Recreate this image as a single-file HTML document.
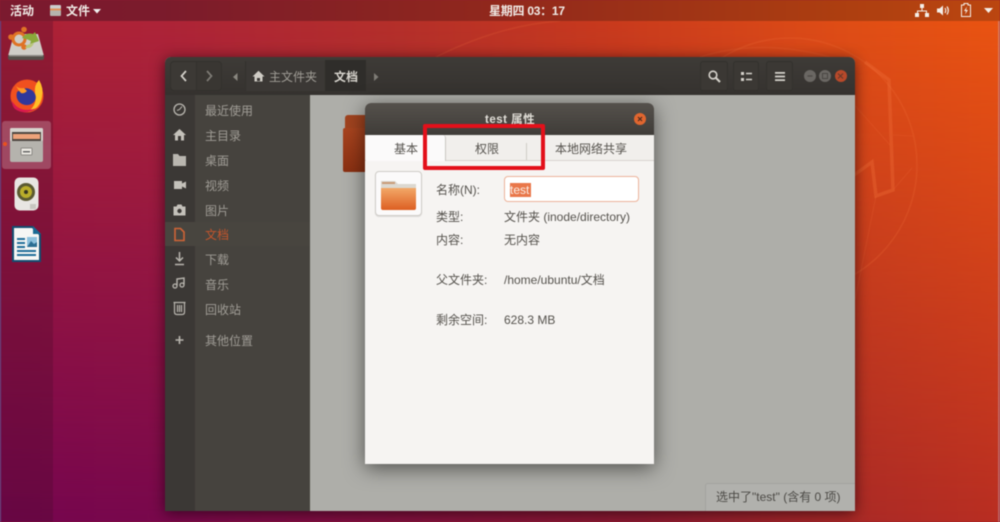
<!DOCTYPE html>
<html><head><meta charset="utf-8"><style>
*{box-sizing:border-box}
html,body{margin:0;padding:0}
body{width:1000px;height:522px;overflow:hidden;position:relative;background:#951c30}
#w{position:absolute;left:0;top:0;width:1000px;height:522px;overflow:hidden;filter:blur(.45px);font-family:"Liberation Sans","Noto Sans CJK SC",sans-serif;font-size:12px;
background:linear-gradient(90deg,#ae2236 0%,#ae2438 16%,#b5302a 40%,#c83a1e 60%,#e04e16 85%,#ea5412 100%)}
#b{position:absolute;left:0;top:0;width:1000px;height:522px;background:linear-gradient(90deg,#75054f 0%,#78084c 16%,#8a1a30 64%,#aa2a26 86%,#b82e22 100%);-webkit-mask-image:linear-gradient(to bottom,transparent 4%,#000 100%);mask-image:linear-gradient(to bottom,transparent 4%,#000 100%)}
.a{position:absolute;white-space:nowrap}
svg{position:absolute;overflow:visible}
.side{color:#a09d96;font-size:12px;left:205px}
.lbl{color:#55524d;font-size:12px}
</style></head><body><div id="w">
<div id="b"></div>
<svg style="left:0;top:0" width="1000" height="522" viewBox="0 0 1000 522" fill="none">
<circle cx="790" cy="165" r="127" stroke="#f0703a" stroke-opacity=".22" stroke-width="1.500"/>
<path d="M865 62L889 80L893 190L876 196L872 162L850 178" stroke="#f0703a" stroke-opacity=".35" stroke-width="3.500"/>
<path d="M893 135L913 136M890 145L850 100M893 190L912 168M876 196L855 300" stroke="#f0703a" stroke-opacity=".2"/>
<path d="M436 57Q500 25 560 21M700 57Q760 38 830 57" stroke="#f0703a" stroke-opacity=".2" stroke-width="1.500"/>
</svg>
<div class="a" style="left:998px;top:21px;width:2px;height:501px;background:rgba(190,170,190,.4)"></div>
<!-- top bar -->
<div class="a" style="left:0;top:0;width:1000px;height:21px;background:linear-gradient(90deg,#7b1a2f,#7b1b2c 16%,#91281c 50%,#ae3f10 85%,#bb4610)"></div>
<div class="a" style="left:10px;top:3px;color:#f0ebe6;font-size:12px;line-height:16px;font-weight:700">活动</div>
<div class="a" style="left:50px;top:5px;width:11px;height:11px;background:linear-gradient(#ccc 0,#ccc 30%,#e0905a 30%,#e0905a 50%,#b5b3ad 50%);border-radius:1px"></div>
<div class="a" style="left:66px;top:3px;color:#f0ebe6;font-size:12px;line-height:16px;font-weight:700">文件</div>
<svg style="left:93px;top:9px" width="8" height="5"><path d="M0 0h8L4 4.500z" fill="#eee"/></svg>
<div class="a" style="left:489px;top:3px;color:#f0ebe6;font-size:12px;line-height:16px;font-weight:700;letter-spacing:-.25px">星期四 03：17</div>
<svg style="left:915px;top:3px" width="14" height="14" viewBox="0 0 14 14"><path d="M5 1h4v4H5zM0 10h4v4H0zM10 10h4v4h-4zM6.500 5h1v2.500H12V10h-1V8.500H3V10H2V7.500h4.500z" fill="#f4eee8"/></svg>
<svg style="left:937px;top:5px" width="13" height="11" viewBox="0 0 13 11"><path d="M0 3.500h2.500L6 0.500v10l-3.500-3H0z" fill="#f4eee8"/><path d="M8 3q1.500 2.500 0 5M10 1.500q2.600 4 0 8" fill="none" stroke="#f4eee8" stroke-width="1.200"/></svg>
<svg style="left:961px;top:3px" width="10" height="14" viewBox="0 0 10 14"><path d="M3 0.500h4v1.500h2.500v11.500H.5V2H3z" fill="none" stroke="#f4eee8"/><path d="M6 3.500L3 8h2l-1 3.500L7 7H5z" fill="#f4eee8"/></svg>
<svg style="left:984px;top:8px" width="9" height="5"><path d="M0 0h9L4.500 5z" fill="#f4eee8"/></svg>
<!-- dock -->
<div class="a" style="left:0;top:21px;width:53px;height:501px;background:rgba(70,12,40,.28)"></div>
<div class="a" style="left:0;top:21px;width:1px;height:501px;background:#5a4a90"></div>
<div class="a" style="left:2px;top:121px;width:49px;height:48px;background:rgba(255,255,255,.22);border-radius:3px"></div>
<div class="a" style="left:3px;top:142px;width:4px;height:4px;border-radius:50%;background:#e9501f"></div>
<svg style="left:0;top:0" width="52" height="70" viewBox="0 0 52 70">
<path d="M14 34h24l6 22H8z" fill="#cfcdc7"/><path d="M8 55h36v3q0 2-2 2H10q-2 0-2-2z" fill="#55504a"/><rect x="9" y="55" width="34" height="1.500" fill="#8b8883"/>
<circle cx="19" cy="39" r="6" fill="none" stroke="#df7326" stroke-width="3"/><circle cx="11" cy="37" r="2.800" fill="#df7326"/><circle cx="24" cy="29.500" r="2.800" fill="#df7326"/><circle cx="24" cy="47" r="2.800" fill="#df7326"/>
<path d="M22 38q4-6 11-4l2-2 4 9-9 3 1-3q-4-2-9-3z" fill="#8aa93a"/><path d="M34 43q-2 6-9 5l2-3z" fill="#b8c67a"/></svg>
<svg style="left:9px;top:78px" width="36" height="35" viewBox="0 0 36 35">
<circle cx="18" cy="18" r="16.500" fill="#f0501f"/><path d="M30 2q5 8 3 17-2 12-14 15 10-8 7-19-1-8 4-13z" fill="#ffbf27"/>
<path d="M11 12q7-4 13 1 5 6 1 11-5 5-12 2-7-4-5-12z" fill="#30379a"/><path d="M7 8q3 3 8 2l3 3q-3 3-6 2-3-3-5-7z" fill="#ff9a25"/><path d="M3 23q8 13 25 7-12 8-22 1-3-3-3-8z" fill="#d8194f"/></svg>
<svg style="left:10px;top:128px" width="33" height="34" viewBox="0 0 33 34">
<rect width="33" height="34" rx="2" fill="#b5b3ad"/><rect width="33" height="13" rx="1.500" fill="#d6d4ce"/><rect x="2" y="4" width="29" height="9" fill="#4d4640"/><rect x="3" y="6" width="27" height="5" fill="#eda37a"/>
<rect x="11" y="20" width="11" height="7" rx="1" fill="#ece9e2" stroke="#8a8884"/><rect x="13" y="23" width="7" height="1.500" fill="#666"/></svg>
<svg style="left:14px;top:177px" width="25" height="35" viewBox="0 0 25 35">
<rect x=".5" y=".5" width="24" height="33" rx="5" fill="#e8e6e2"/><circle cx="12" cy="15" r="9" fill="#5b5a32"/><circle cx="12" cy="15" r="6" fill="#b9ad2a"/><circle cx="12" cy="15" r="2" fill="#363520"/><rect x="16" y="27" width="6" height="5" fill="#c8c6c0"/></svg>
<svg style="left:12px;top:225px" width="30" height="38" viewBox="0 0 30 38">
<path d="M0 1h21l8 8v28H0z" fill="#124e72"/><path d="M2 3h18l7 7v25H2z" fill="#f6f6f4"/><path d="M21 1l8 8h-8z" fill="#1a6a94"/>
<path d="M5 13h8v2H5zM5 17h8v2H5zM5 21h8v2H5zM5 25h19v2H5zM5 29h19v2H5z" fill="#1f6d9a"/><rect x="15" y="12" width="10" height="10" fill="#8cc0dc"/><path d="M15 22l4-6 3 3 3-2v5z" fill="#2a6d92"/></svg>
<!-- file window -->
<div class="a" style="left:165px;top:57px;width:690px;height:454px;background:#aeaea9;border-radius:6px 6px 0 0;box-shadow:0 2px 14px rgba(20,0,10,.65)"></div>
<div class="a" style="left:165px;top:57px;width:690px;height:38px;background:linear-gradient(#3e3b37,#35322f);border-radius:6px 6px 0 0"></div>
<div class="a" style="left:170px;top:61px;width:27px;height:30px;background:#3c3935;border:1px solid #33312d;border-radius:4px 0 0 4px"></div>
<div class="a" style="left:196px;top:61px;width:26px;height:30px;background:#393632;border:1px solid #33312d;border-radius:0 4px 4px 0"></div>
<svg style="left:180px;top:70px" width="8" height="12"><path d="M6 1L1.500 6 6 11" fill="none" stroke="#d6d3cc" stroke-width="1.700"/></svg>
<svg style="left:205px;top:70px" width="8" height="12"><path d="M2 1L6.500 6 2 11" fill="none" stroke="#7f7c76" stroke-width="1.700"/></svg>
<svg style="left:233px;top:73px" width="5" height="8"><path d="M4.500 0v8L0 4z" fill="#8a8780"/></svg>
<div class="a" style="left:245px;top:61px;width:80px;height:30px;background:#3b3835;border-left:1px solid #33312d"></div>
<svg style="left:252px;top:70px" width="13" height="12" viewBox="0 0 13 12"><path d="M6.500 .8L.5 6.500h2V11.500h8V6.500h2zM5 8h3v3H5z" fill="#cfccc5" fill-rule="evenodd"/></svg>
<div class="a" style="left:269px;top:69px;color:#a09d96;font-size:12px;line-height:16px">主文件夹</div>
<div class="a" style="left:325px;top:60px;width:41px;height:31px;background:#2f2d2a"></div>
<div class="a" style="left:334px;top:69px;color:#d8d5ce;font-size:12px;line-height:16px;font-weight:700">文档</div>
<svg style="left:374px;top:73px" width="5" height="8"><path d="M0 0v8l4.500-4z" fill="#7f7c76"/></svg>
<div class="a" style="left:700px;top:61px;width:28px;height:30px;background:#3b3834;border:1px solid #33312d;border-radius:3px"></div>
<div class="a" style="left:733px;top:61px;width:26px;height:30px;background:#3b3834;border:1px solid #33312d;border-radius:3px"></div>
<div class="a" style="left:766px;top:61px;width:27px;height:30px;background:#3b3834;border:1px solid #33312d;border-radius:3px"></div>
<svg style="left:708px;top:70px" width="13" height="13" viewBox="0 0 13 13"><circle cx="5" cy="5" r="3.800" fill="none" stroke="#d6d3cc" stroke-width="1.600"/><path d="M8 8l4 4" stroke="#d6d3cc" stroke-width="2"/></svg>
<svg style="left:741px;top:72px" width="11" height="9" viewBox="0 0 11 9"><path d="M0 0h3v3H0zM0 6h3v3H0zM5 .8h6v1.500H5zM5 6.800h6v1.500H5z" fill="#d6d3cc"/></svg>
<svg style="left:775px;top:72px" width="10" height="9" viewBox="0 0 10 9"><path d="M0 0h10v1.800H0zM0 3.600h10v1.800H0zM0 7.200h10V9H0z" fill="#d6d3cc"/></svg>
<div class="a" style="left:804px;top:70px;width:12px;height:12px;border-radius:50%;background:#6a6763"></div>
<div class="a" style="left:819px;top:70px;width:12px;height:12px;border-radius:50%;background:#6a6763"></div>
<div class="a" style="left:835px;top:70px;width:12px;height:12px;border-radius:50%;background:#b8492a"></div>
<svg style="left:804px;top:70px" width="44" height="12"><path d="M3.500 6h5" stroke="#4a4743" stroke-width="1.200"/><rect x="18.500" y="3.500" width="5" height="5" fill="none" stroke="#4a4743"/><path d="M34 3.500l5 5M39 3.500l-5 5" stroke="#6a3a2a" stroke-width="1.200"/></svg>
<!-- sidebar -->
<div class="a" style="left:165px;top:95px;width:145px;height:416px;background:#46433e"></div>
<div class="a" style="left:165px;top:95px;width:30px;height:416px;background:#3b3835"></div>
<div class="a" style="left:165px;top:222px;width:145px;height:24px;background:#48453f"></div>
<svg style="left:165px;top:95px" width="30" height="260" viewBox="0 0 30 260" fill="none" stroke="#b9b6af">
<circle cx="14.500" cy="14.500" r="5.500" stroke-width="1.300"/><path d="M17 11.500l-2.500 3-2.500 1" stroke-width="1"/>
<path d="M14.500 34l-6.500 6h2v5.500h9V40h2zM13 41h3v4.500h-3z" fill="#c4c1ba" stroke="none" fill-rule="evenodd"/>
<path d="M8 59h5l1.500 2H21v10H8z" fill="#b9b6af" stroke="none"/>
<path d="M9 86h8v8H9zM17 88.500l4-2v7l-4-2z" fill="#c4c1ba" stroke="none"/>
<path d="M8.500 111.500h3l1-2h4l1 2h3v9h-12z" fill="#c4c1ba" stroke="none"/><circle cx="14.500" cy="116" r="2.200" fill="#3b3835" stroke="none"/>
<path d="M10 133.500h5.500l3.500 3.500v8.500h-9z" stroke="#cf6436" stroke-width="1.600"/>
<path d="M14.500 157v9M11 162.500l3.500 3.500 3.500-3.500M10 169.500h9" stroke-width="1.500"/>
<path d="M12 190.500v-6.500l7-1v6.500" stroke-width="1.400"/><circle cx="10" cy="191" r="2" stroke-width="1.300"/><circle cx="17" cy="190" r="2" stroke-width="1.300"/>
<path d="M8.500 207.500h12M9.500 208v9q0 2.500 2.500 2.500h5q2.500 0 2.500-2.500v-9M12.500 210v7M14.500 210v7M16.500 210v7" stroke-width="1.200"/>
<path d="M14.500 241v8M10.500 245h8" stroke-width="1.600"/></svg>
<div class="a side" style="top:103px;line-height:16px">最近使用</div>
<div class="a side" style="top:128px;line-height:16px">主目录</div>
<div class="a side" style="top:153px;line-height:16px">桌面</div>
<div class="a side" style="top:178px;line-height:16px">视频</div>
<div class="a side" style="top:203px;line-height:16px">图片</div>
<div class="a side" style="top:227px;line-height:16px;color:#c4552c">文档</div>
<div class="a side" style="top:252px;line-height:16px">下载</div>
<div class="a side" style="top:277px;line-height:16px">音乐</div>
<div class="a side" style="top:302px;line-height:16px">回收站</div>
<div class="a side" style="top:333px;line-height:16px">其他位置</div>
<!-- folder behind -->
<div class="a" style="left:345px;top:115px;width:30px;height:56px;background:#a0431f;border-radius:3px 0 0 3px"></div>
<div class="a" style="left:343px;top:128px;width:30px;height:44px;background:linear-gradient(#a8441f,#8a3012);border-radius:2px"></div>
<!-- status -->
<div class="a" style="left:705px;top:483px;width:150px;height:28px;background:#b1b1ad;border:1px solid #a3a39f;border-right:0;border-bottom:0;border-radius:3px 0 0 0"></div>
<div class="a" style="left:716px;top:489px;color:#4c4a46;font-size:12px;line-height:16px">选中了"test" (含有 0 项)</div>
<!-- dialog -->
<div class="a" style="left:365px;top:103px;width:289px;height:361px;background:#f6f4f2;border-radius:6px 6px 0 0;box-shadow:0 4px 20px rgba(0,0,0,.55)"></div>
<div class="a" style="left:365px;top:103px;width:289px;height:32px;background:linear-gradient(#55514c,#3f3c38);border-radius:6px 6px 0 0"></div>
<div class="a" style="left:485px;top:112px;color:#e2dfd8;font-size:11.500px;line-height:16px;font-weight:700;letter-spacing:.5px">test 属性</div>
<div class="a" style="left:634px;top:113px;width:12px;height:12px;border-radius:50%;background:#e0662f"></div>
<svg style="left:634px;top:113px" width="12" height="12"><path d="M4 4l4 4M8 4l-4 4" stroke="#4a2a20" stroke-width="1.200"/></svg>
<div class="a" style="left:365px;top:135px;width:289px;height:26px;background:#f1efec;border-bottom:1px solid #d8d5d0"></div>
<div class="a" style="left:366px;top:135px;width:80px;height:26px;background:#fbfafa;border-right:1px solid #c9c6c1;border-radius:3px 3px 0 0"></div>
<div class="a" style="left:526px;top:143px;width:1px;height:17px;background:#cfccc7"></div>
<div class="a" style="left:394px;top:141px;color:#55524d;font-size:12px;line-height:16px">基本</div>
<div class="a" style="left:475px;top:141px;color:#55524d;font-size:12px;line-height:16px">权限</div>
<div class="a" style="left:555px;top:141px;color:#55524d;font-size:12px;line-height:16px">本地网络共享</div>
<div class="a" style="left:423px;top:124px;width:122px;height:46px;border:4px solid #e3101a;border-radius:2px"></div>
<div class="a" style="left:375px;top:171px;width:47px;height:45px;background:#fbfafa;border:1px solid #cfccc7;border-radius:4px;box-shadow:0 1px 1px rgba(0,0,0,.1)"></div>
<svg style="left:380px;top:180px" width="37" height="31" viewBox="0 0 37 31"><defs><linearGradient id="f" x1="0" y1="0" x2="0" y2="1"><stop offset="0" stop-color="#f2a868"/><stop offset="1" stop-color="#dd5f22"/></linearGradient></defs>
<path d="M1 1h14l3 3h18v10H1z" fill="#dcd8d0"/><rect x="2" y="2" width="13" height="2" fill="#c99b78"/><path d="M1 8h35v20q0 2-2 2H3q-2 0-2-2z" fill="url(#f)"/></svg>
<div class="a lbl" style="left:436px;top:182px;line-height:16px">名称(N):</div>
<div class="a" style="left:504px;top:176px;width:135px;height:26px;background:#fff;border:1px solid #edb39a;border-radius:4px"></div>
<div class="a" style="left:510px;top:183px;width:21px;height:14px;background:#e9774a"></div>
<div class="a" style="left:510px;top:183px;color:#fbeee6;font-size:12px;line-height:14px">test</div>
<div class="a lbl" style="left:436px;top:209px;line-height:16px">类型:</div>
<div class="a lbl" style="left:504px;top:209px;line-height:16px">文件夹 (inode/directory)</div>
<div class="a lbl" style="left:436px;top:232px;line-height:16px">内容:</div>
<div class="a lbl" style="left:504px;top:232px;line-height:16px">无内容</div>
<div class="a lbl" style="left:436px;top:272px;line-height:16px">父文件夹:</div>
<div class="a lbl" style="left:504px;top:272px;line-height:16px">/home/ubuntu/文档</div>
<div class="a lbl" style="left:436px;top:312px;line-height:16px">剩余空间:</div>
<div class="a lbl" style="left:504px;top:312px;line-height:16px">628.3 MB</div>
</div></body></html>
